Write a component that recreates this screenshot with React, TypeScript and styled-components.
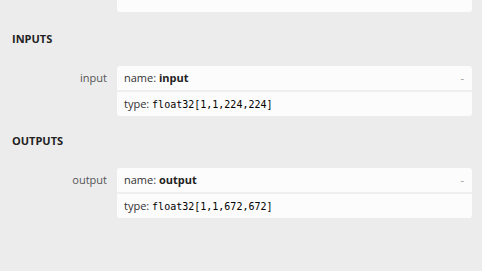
import React from 'react';
import styled, { createGlobalStyle } from 'styled-components';

const GlobalStyle = createGlobalStyle`
  body {
    margin: 0;
    background: #ffffff;
    font-family: "Open Sans", "Noto Sans", sans-serif;
  }
`

type Arg = {
  label: string;
  name: string;
  type: string;
}

const inputs: Arg[] = [{ label: 'input', name: 'input', type: 'float32[1,1,224,224]' }]
const outputs: Arg[] = [{ label: 'output', name: 'output', type: 'float32[1,1,672,672]' }]

const ArgRow: React.FC<{ arg: Arg }> = ({ arg }) => (
  <Row>
    <Label>{arg.label}</Label>
    <Card>
      <CardLine>
        <span>name: <b>{arg.name}</b></span>
        <Toggle>-</Toggle>
      </CardLine>
      <Divider />
      <CardLine>
        <span>type: <Mono>{arg.type}</Mono></span>
      </CardLine>
    </Card>
  </Row>
)

const App: React.FC = () => {
  return (
    <>
      <GlobalStyle />
      <Page>
        <TopCard />
        <Heading>INPUTS</Heading>
        {inputs.map((a) => <ArgRow key={a.name} arg={a} />)}
        <Heading second>OUTPUTS</Heading>
        {outputs.map((a) => <ArgRow key={a.name} arg={a} />)}
      </Page>
    </>
  );
}

export default App;

const Page = styled.div`
  background: #ececec;
  height: 271px;
  display: flex;
  flex-direction: column;
`

const TopCard = styled.div`
  margin-left: 117px;
  margin-right: 10px;
  height: 12px;
  background: #fcfcfc;
  border-radius: 0 0 3px 3px;
`

const Heading = styled.div<{ second?: boolean }>`
  margin: ${(p) => (p.second ? '15px' : '17px')} 0 17px 12px;
  height: 20px;
  line-height: 20px;
  font-size: 11px;
  font-weight: 700;
  color: #222;
`

const Row = styled.div`
  display: flex;
  align-items: flex-start;
`

const Label = styled.div`
  width: 107px;
  flex-shrink: 0;
  text-align: right;
  line-height: 24px;
  font-size: 11px;
  color: #555;
`

const Card = styled.div`
  margin-left: 10px;
  margin-right: 10px;
  flex: 1;
  background: #fcfcfc;
  border-radius: 3px;
  height: 50px;
  display: flex;
  flex-direction: column;
`

const CardLine = styled.div`
  height: 24px;
  line-height: 24px;
  padding: 0 8px 0 7px;
  display: flex;
  justify-content: space-between;
  font-size: 11px;
  color: #333;

  b {
    font-weight: 700;
    color: #222;
  }
`

const Divider = styled.div`
  height: 2px;
  background: #efefef;
`

const Toggle = styled.span`
  color: #999;
  font-size: 11px;
`

const Mono = styled.span`
  font-family: "DejaVu Sans Mono", monospace;
  font-size: 10px;
  color: #000;
`
